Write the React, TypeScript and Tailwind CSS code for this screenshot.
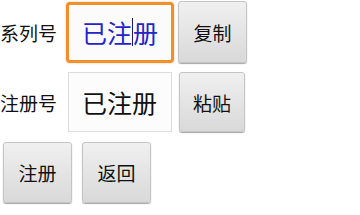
import React from "react";

const font = { fontFamily: '"Noto Sans CJK SC", "Droid Sans Fallback", sans-serif' };

function Btn({ label, className }: { label: string; className: string }) {
  return (
    <div
      className={`flex items-center justify-center rounded-[3px] border border-[#c4c4c4] bg-gradient-to-b from-[#f0f0f0] to-[#d9d9d9] text-[19px] leading-none text-[#111] shadow-[0_1px_1px_rgba(0,0,0,0.35)] ${className}`}
    >
      {label}
    </div>
  );
}

export default function App() {
  return (
    <div className="relative h-[215px] w-[360px] overflow-hidden bg-white" style={font}>
      {/* Row 1 */}
      <div className="flex h-[64px] items-center">
        <div className="w-[66px] text-[19px] leading-none text-[#111]">系列号</div>
        <div className="flex h-[61px] w-[108px] items-center rounded-[4px] border-[3px] border-[#f0902a] bg-[#fbfbfb] pl-[13px] shadow-[0_0_2px_rgba(240,144,42,0.6)]">
          <span className="text-[25px] leading-none text-[#2424c8]">已注</span>
          <span className="h-[28px] w-[1px] bg-[#1c1c6c]" />
          <span className="text-[25px] leading-none text-[#2424c8]">册</span>
        </div>
        <Btn label="复制" className="ml-[4px] mt-[1px] h-[62px] w-[69px] self-start" />
      </div>
      {/* Row 2 */}
      <div className="mt-[8px] flex h-[60px] items-center">
        <div className="w-[68px] text-[19px] leading-none text-[#111]">注册号</div>
        <div className="flex h-[60px] w-[104px] items-center border border-[#dcdcdc] bg-[#fcfcfc] pl-[13px]">
          <span className="text-[25px] leading-none text-[#111]">已注册</span>
        </div>
        <Btn label="粘贴" className="ml-[7px] h-[60px] w-[66px]" />
      </div>
      {/* Row 3 */}
      <div className="mt-[10px] flex gap-[10px] pl-[3px]">
        <Btn label="注册" className="h-[61px] w-[69px]" />
        <Btn label="返回" className="h-[61px] w-[69px]" />
      </div>
    </div>
  );
}
